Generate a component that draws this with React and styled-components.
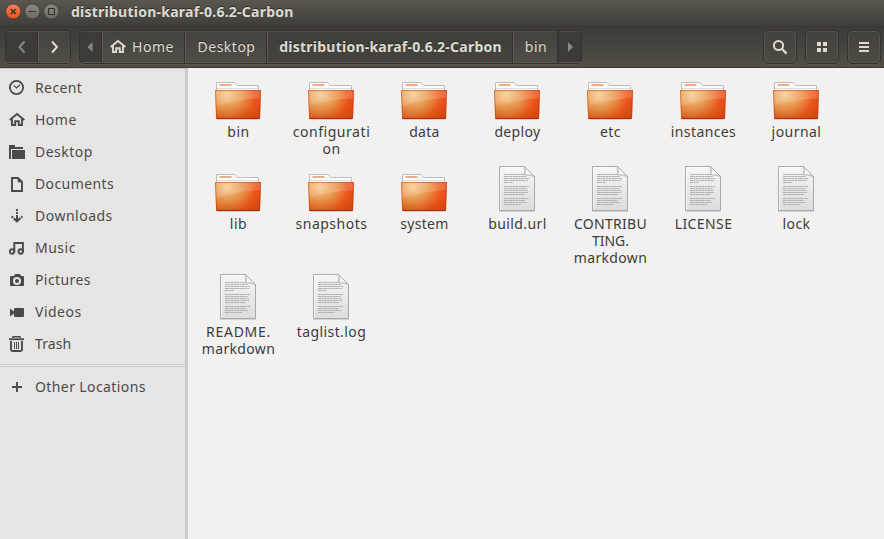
import React from 'react';
import styled, { createGlobalStyle, css } from 'styled-components';

const GlobalStyle = createGlobalStyle`
  * { box-sizing: border-box; }
  body { margin: 0; background: #f2f1f0; }
  svg { display: block; flex: none; }
`;

const Window = styled.div`
  width: 100%;
  height: 100vh;
  min-height: 539px;
  display: flex;
  flex-direction: column;
  overflow: hidden;
  font-family: 'Noto Sans', 'Open Sans', sans-serif;
  font-size: 14px;
  color: #3c3c3c;
`;

const TitleBar = styled.header`
  height: 26px;
  flex: none;
  display: flex;
  align-items: center;
  padding: 0 0 3px 5px;
  background: linear-gradient(#5a574e, #3f3e39);
`;

const WindowControls = styled.div`
  display: flex;
  gap: 3px;
  margin-right: 12px;
`;

const Title = styled.h1`
  margin: 0;
  font-size: 14px;
  line-height: 20px;
  font-weight: 700;
  letter-spacing: 0.24px;
  color: #dfdbd2;
  text-shadow: 0 -1px #2c2b27;
  padding-top: 1px;
`;

const Toolbar = styled.nav`
  height: 42px;
  flex: none;
  display: flex;
  align-items: flex-start;
  padding: 3px 3px 0 5px;
  background: linear-gradient(#3c3b37, #504e46);
  border-top: 1px solid #383733;
  border-bottom: 1px solid #3a3934;
`;

const frame = css`
  height: 34px;
  border: 1px solid #33322e;
  border-radius: 5px;
  box-shadow: inset 0 0 0 1px #55534b, 0 1px #5a584f;
  background: linear-gradient(#43423d, #4c4a43);
`;

const ButtonGroup = styled.div`
  ${frame}
  display: flex;
  width: ${(p) => p.$width}px;
  margin-right: 8px;
  overflow: hidden;
`;

const Segment = styled.button`
  width: ${(p) => p.$width}px;
  flex: none;
  height: 32px;
  display: flex;
  align-items: center;
  justify-content: center;
  gap: 6px;
  padding: 0 ${(p) => p.$trailing ?? 0}px 0 0;
  border: 0;
  border-left: ${(p) => (p.$first ? 0 : 1)}px solid ${(p) => (p.$sunken ? '#383733' : '#5d5b53')};
  background: ${(p) => (p.$sunken ? '#3c3b37' : p.$current ? 'linear-gradient(#403f3a, #45433d)' : 'linear-gradient(#43423d, #504e47)')};
  box-shadow: inset 0 1px #504e47, inset 0 -1px #5b5951${(p) => (p.$first ? '' : ', -1px 0 #33322e')};
  color: #dfdbd2;
  font: ${(p) => (p.$current ? 700 : 400)} 14px/20px 'Noto Sans', sans-serif;
  letter-spacing: ${(p) => p.$tracking ?? 0.5}px;
  text-shadow: 0 -1px #2c2b27;
`;

const ToolButtons = styled.div`
  display: flex;
  gap: 8px;
  margin-left: auto;
`;

const ToolButton = styled.button`
  ${frame}
  width: 34px;
  display: flex;
  align-items: center;
  justify-content: center;
  padding: 0 0 1px;
`;

const Body = styled.div`
  flex: 1;
  display: flex;
  min-height: 0;
`;

const Sidebar = styled.aside`
  width: 188px;
  flex: none;
  padding-top: 3px;
  background: #e6e5e4;
  border-top: 1px solid #c6c5c3;
  border-right: 3px solid #cccbca;
  color: #4a4a4a;
`;

const Place = styled.div`
  height: 32px;
  display: flex;
  align-items: center;
  gap: 10px;
  padding-left: 9px;
  line-height: 20px;
  letter-spacing: ${(p) => p.$tracking ?? 0.5}px;
`;

const Separator = styled.hr`
  height: 3px;
  margin: 4px 0;
  border: solid #c9c8c7;
  border-width: 1px 0;
  background: #efeeed;
`;

const Files = styled.main`
  flex: 1;
  display: grid;
  grid-template-columns: repeat(7, 93px);
  grid-template-rows: 92px 108px 92px;
  padding: 4px 0 0 4px;
  background: #f2f1f0;
`;

const File = styled.figure`
  margin: 0;
  display: flex;
  flex-direction: column;
  align-items: center;
`;

const Thumbnail = styled.div`
  padding-right: 2px;
`;

const FileLabel = styled.figcaption`
  margin-top: 3px;
  text-align: center;
  line-height: 17px;
  white-space: nowrap;
`;

const Line = styled.span`
  display: block;
  letter-spacing: ${(p) => p.$tracking ?? 0.4}px;
`;

const RoundButton = ({ kind }) => (
  <svg width="16" height="17" viewBox="0 0 16 17">
    <defs>
      <linearGradient id={`round-${kind}`} x2="0" y2="1">
        <stop offset="0" stopColor={kind === 'close' ? '#f8805a' : '#8b8982'} />
        <stop offset="1" stopColor={kind === 'close' ? '#e8501d' : '#6b6962'} />
      </linearGradient>
    </defs>
    <circle cx="8.3" cy="8.5" r="7.6" fill={`url(#round-${kind})`} stroke="#3b3a35" strokeWidth=".8" />
    <g fill="none" stroke="#34332e" strokeWidth="1">
      {kind === 'close' && <path d="M5.8 6l5 5M10.8 6l-5 5" strokeWidth="1.5" />}
      {kind === 'minimize' && <path d="M4.5 8.5h7.5" />}
      {kind === 'maximize' && <path d="M5.5 5.5h6v6h-6z" />}
    </g>
  </svg>
);

const Icon = ({ children, color = '#4a4a4a', size = 16 }) => (
  <svg width={size} height={size} viewBox="0 0 16 16" fill="none" stroke={color} strokeWidth="2">
    {children}
  </svg>
);

const HomeShape = ({ color }) => (
  <g fill="none" stroke={color}>
    <path d="M.7 8L8 1.9 15.3 8" strokeWidth="1.9" />
    <path d="M3 7v6h3.2V9.2h3.6V13H13V7" strokeWidth="1.9" />
  </g>
);

const icons = {
  recent: <><circle cx="7.5" cy="7.5" r="6.6" strokeWidth="1.8" /><path d="M4.7 5.4l2.8 2.5 3.4-3.2" strokeWidth="1.2" /></>,
  home: <HomeShape color="#4a4a4a" />,
  desktop: <g fill="#4a4a4a" stroke="none"><path d="M0 1h6v2h8v2H2v10H0z" /><path d="M3 6h13v9H3z" /></g>,
  documents: <g strokeWidth="1.9"><path d="M3 2h6l4 4v9H3z" /><path d="M9 2v4h4z" fill="#4a4a4a" strokeWidth=".6" /></g>,
  downloads: <g><path d="M8 1v2M8 4v2M8 7v6" /><path d="M2.6 8.4L8 13.2l5.4-4.8" strokeWidth="2.2" strokeDasharray="2 1 9 1 2" /></g>,
  music: <g strokeWidth="1.9"><circle cx="3" cy="11.5" r="2.2" /><circle cx="11.7" cy="11.5" r="2.2" /><path d="M5.3 12V3h8.6v9" /><path d="M5 3h9" /></g>,
  pictures: <path stroke="none" fill="#4a4a4a" fillRule="evenodd" d="M2 4h3l1-2h5l1 2h2q1 0 1 1v8q0 1-1 1H2q-1 0-1-1V5q0-1 1-1zM8 5a4 4 0 100 8 4 4 0 000-8zM8 7a2 2 0 110 4 2 2 0 010-4z" />,
  videos: <path stroke="none" fill="#4a4a4a" d="M6 4h8q1 0 1 1v7q0 1-1 1H6q-1 0-1-1V9.6l-4 3v-8l4 3V5q0-1 1-1z" />,
  trash: <g><path d="M0 3.2h15" strokeWidth="1.8" /><path d="M4 2V.8h7V2" strokeWidth="1.4" /><path d="M2 5v8.5q0 1.5 1.5 1.5h8q1.5 0 1.5-1.5V5" strokeWidth="1.9" /><path d="M5.5 6v7M7.5 6v7M9.5 6v7" strokeWidth="1" /></g>,
  plus: <path d="M8 3v10M3 8h10" strokeWidth="1.9" />,
};

const FolderArt = () => (
  <svg width="48" height="48" viewBox="0 0 48 48">
    <defs>
      <radialGradient id="folder-front" gradientUnits="userSpaceOnUse" cx="13" cy="23" r="35">
        <stop offset="0" stopColor="#f6cd94" />
        <stop offset="0.45" stopColor="#ea9850" />
        <stop offset="0.8" stopColor="#f0561d" />
        <stop offset="1" stopColor="#e24a17" />
      </radialGradient>
      <linearGradient id="folder-shade" x2="0" y2="1">
        <stop offset="0.3" stopColor="#c06010" stopOpacity="0" />
        <stop offset="1" stopColor="#c03c04" stopOpacity="0.38" />
      </linearGradient>
      <linearGradient id="folder-gloss">
        <stop offset="0" stopColor="#fff" stopOpacity="0.1" />
        <stop offset="1" stopColor="#fff" stopOpacity="0.17" />
      </linearGradient>
    </defs>
    <path d="M3 47.5h42" stroke="#d5d2ce" />
    <path d="M2.5 22V11q0-.5.5-.5h17q1 0 1.5.7l2 2.3H44q.5 0 .5.5v10z" fill="#fbfbfb" stroke="#bdbcbb" />
    <path d="M3 16.5h41" stroke="#dedddb" />
    <path d="M5.5 13h12" stroke="#f2ab80" strokeWidth="2" />
    <path d="M1 18h46l-1 28.4q0 .6-.7.6H3q-.8 0-.8-.6z" fill="url(#folder-front)" />
    <path d="M1 18h46l-1 28.4q0 .6-.7.6H3q-.8 0-.8-.6z" fill="url(#folder-shade)" />
    <path d="M1 18h46l-.4 8Q24 27 2 34z" fill="url(#folder-gloss)" />
    <path d="M1.5 18.5h45l-1 27.9H2.6z" fill="none" stroke="#b93b10" strokeOpacity="0.5" />
    <path d="M2.6 46.5h42.9" stroke="#a92d0d" />
  </svg>
);

const textRows = [
  [10, 25], [12, 23], [14, 25], [16, 24], [18, 9],
  [22, 25], [24, 23], [26, 24], [28, 24], [30, 21],
  [34, 25], [36, 21], [38, 23], [40, 17],
];

const DocumentArt = () => (
  <svg width="48" height="48" viewBox="0 0 48 48">
    <defs>
      <linearGradient id="paper" x2="0" y2="1">
        <stop offset="0" stopColor="#f6f6f6" />
        <stop offset="1" stopColor="#dcdcdc" />
      </linearGradient>
      <linearGradient id="curl" x1="0" y1="1" x2="1" y2="0">
        <stop offset="0" stopColor="#fff" />
        <stop offset="0.5" stopColor="#f2f2f2" />
        <stop offset="1" stopColor="#aaa" />
      </linearGradient>
    </defs>
    <path d="M6 47.5h36" stroke="#d4d3d2" />
    <path d="M6.5 2.5h25l10 10v34h-35z" fill="url(#paper)" stroke="#a9a9a9" />
    <path d="M7.5 45.5v-42h23" fill="none" stroke="#fff" strokeOpacity="0.7" />
    {textRows.map(([y, width]) => (
      <path key={y} d={`M11 ${y + 0.5}h${width}`} stroke="#b0b0b0" strokeDasharray="3 .4 2 .3" />
    ))}
    <path d="M28 2.5l3 2v6.5q5-1 10.5 3z" fill="#aaa" fillOpacity="0.5" />
    <path d="M31.5 2.5q1.5 3 .3 8.5 6-.9 9.7 1.5z" fill="url(#curl)" stroke="#a7a7a7" strokeWidth=".8" />
  </svg>
);

const places = [
  ['recent', 'Recent', 0.4], ['home', 'Home'], ['desktop', 'Desktop'],
  ['documents', 'Documents', 0.4], ['downloads', 'Downloads'], ['music', 'Music'],
  ['pictures', 'Pictures', 0.4], ['videos', 'Videos'], ['trash', 'Trash', 0.1],
];

const files = [
  ['folder', [['bin', 0.5]]],
  ['folder', [['configurati', 0.55], ['on', 0.4]]],
  ['folder', [['data', 0.3]]],
  ['folder', [['deploy', 0.35]]],
  ['folder', [['etc']]],
  ['folder', [['instances']]],
  ['folder', [['journal', 0.45]]],
  ['folder', [['lib', 0.5]]],
  ['folder', [['snapshots', 0.5]]],
  ['folder', [['system', 0.3]]],
  ['document', [['build.url', 0.4]]],
  ['document', [['CONTRIBU', 0.3], ['TING.', 0], ['markdown', 0.35]]],
  ['document', [['LICENSE', 0.4]]],
  ['document', [['lock']]],
  ['document', [['README.', 0.7], ['markdown', 0.35]]],
  ['document', [['taglist.log', 0.4]]],
];

export default function App() {
  return (
    <Window>
      <GlobalStyle />
      <TitleBar>
        <WindowControls>
          <RoundButton kind="close" />
          <RoundButton kind="minimize" />
          <RoundButton kind="maximize" />
        </WindowControls>
        <Title>distribution-karaf-0.6.2-Carbon</Title>
      </TitleBar>
      <Toolbar>
        <ButtonGroup $width={66}>
          <Segment $first $sunken $width={32} aria-label="Back">
            <Icon color="#8b8982"><path d="M10.5 2.5L5.5 8l5 5.5" /></Icon>
          </Segment>
          <Segment $width={32} aria-label="Forward">
            <Icon color="#dfdbd2"><path d="M5 2.5L10 8l-5 5.5" /></Icon>
          </Segment>
        </ButtonGroup>
        <ButtonGroup $width={503}>
          <Segment $first $sunken $width={22} $trailing={2} aria-label="Scroll path left">
            <Icon><path d="M10.5 3v10l-5-5z" fill="#8b8982" stroke="none" /></Icon>
          </Segment>
          <Segment $width={83} $trailing={4}>
            <Icon><HomeShape color="#dfdbd2" /></Icon>
            Home
          </Segment>
          <Segment $width={82}>Desktop</Segment>
          <Segment $current $width={246} $tracking={0.24}>distribution-karaf-0.6.2-Carbon</Segment>
          <Segment $width={45}>bin</Segment>
          <Segment $sunken $width={23} aria-label="Scroll path right">
            <Icon><path d="M6 3v10l5-5z" fill="#8b8982" stroke="none" /></Icon>
          </Segment>
        </ButtonGroup>
        <ToolButtons>
          <ToolButton aria-label="Search">
            <Icon color="#dfdbd2"><circle cx="6.5" cy="6.5" r="4.6" /><path d="M9.8 9.8l4.8 4.8" strokeWidth="2.3" /></Icon>
          </ToolButton>
          <ToolButton aria-label="Grid view">
            <Icon><path fill="#dfdbd2" stroke="none" d="M3 3h4v4H3zM9 3h4v4H9zM3 9h4v4H3zM9 9h4v4H9z" /></Icon>
          </ToolButton>
          <ToolButton aria-label="Menu">
            <Icon color="#dfdbd2"><path d="M3 4h10M3 8h10M3 12h10" /></Icon>
          </ToolButton>
        </ToolButtons>
      </Toolbar>
      <Body>
        <Sidebar>
          {places.map(([icon, label, tracking]) => (
            <Place key={label} $tracking={tracking}>
              <Icon>{icons[icon]}</Icon>
              {label}
            </Place>
          ))}
          <Separator />
          <Place $tracking={0.4}>
            <Icon>{icons.plus}</Icon>
            Other Locations
          </Place>
        </Sidebar>
        <Files>
          {files.map(([type, lines]) => (
            <File key={lines[0][0]}>
              <Thumbnail>{type === 'folder' ? <FolderArt /> : <DocumentArt />}</Thumbnail>
              <FileLabel>
                {lines.map(([text, tracking]) => (
                  <Line key={text} $tracking={tracking}>{text}</Line>
                ))}
              </FileLabel>
            </File>
          ))}
        </Files>
      </Body>
    </Window>
  );
}
